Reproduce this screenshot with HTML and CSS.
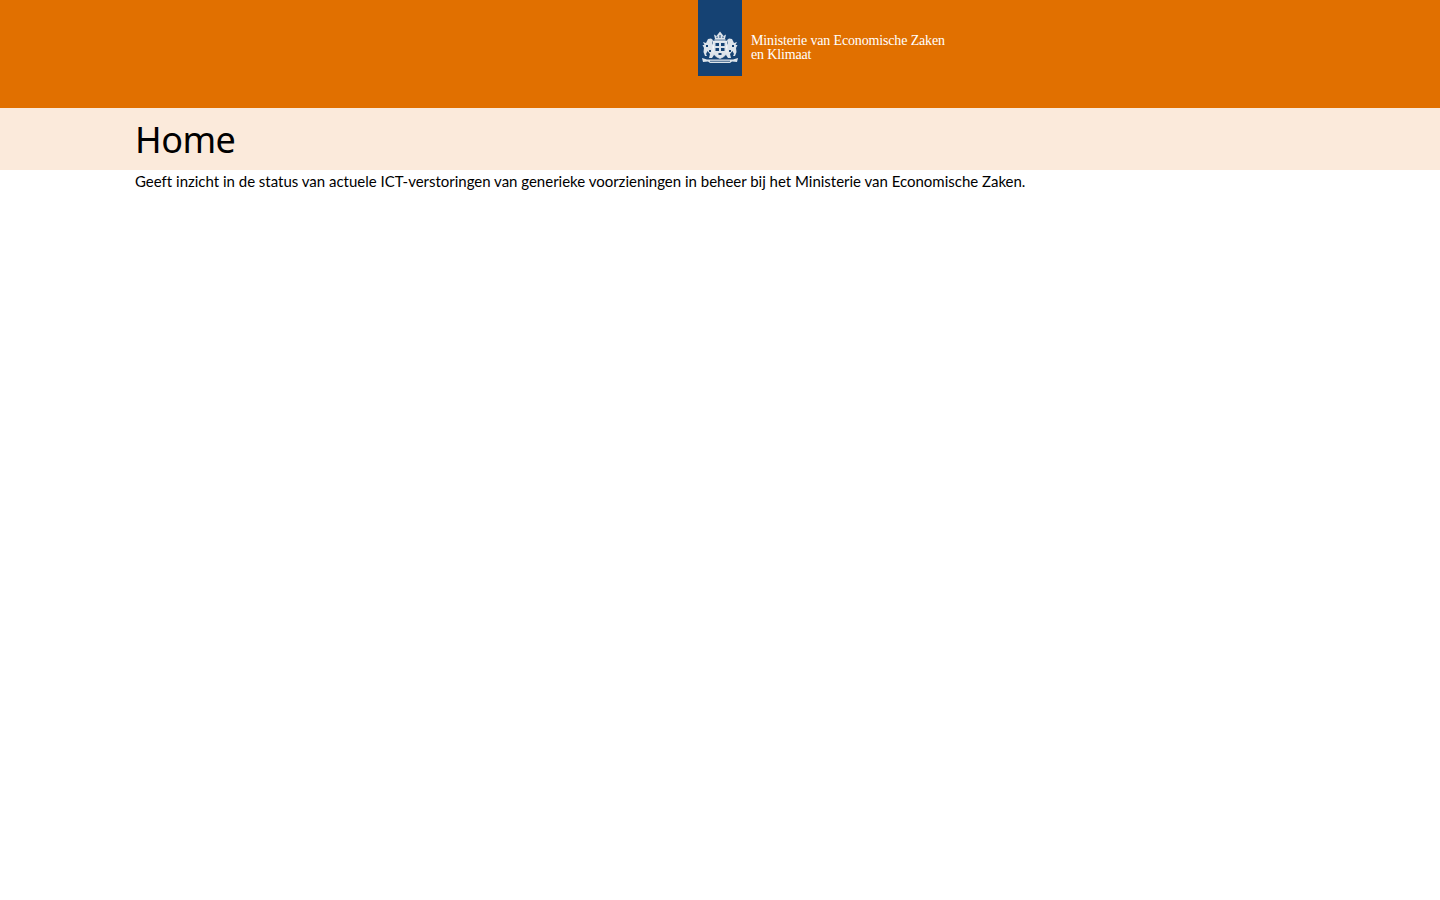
FILE: index.html
```html
<!DOCTYPE html>
<html lang="nl">
<head>
<meta charset="utf-8">
<title>Home</title>
<link rel="stylesheet" href="styles.css">
</head>
<body>
<header class="site-header">
  <a class="logo" href="#">
    <span class="logo-mark">
      <svg class="crest" viewBox="0 0 38 33" width="38" height="33" aria-hidden="true">
        <g fill="#fff" fill-opacity=".85">
          <path d="M14 8 L13 3.5 L15.5 5 L17 3 L19 .5 L21 3 L22.5 5 L25 3.5 L24 8 Z"/>
          <path d="M7 8 L10 7.5 L12 9 L11 12 L13 16 L12 19 L13 24 L11 27 L8 27 L9 23 L6.5 20 L5 23 L6 25 L4 25 L2.5 21 L3 17 L1.5 14 L3.5 14 L2 11 L5 12 Z"/>
          <path d="M31 8 L28 7.5 L26 9 L27 12 L25 16 L26 19 L25 24 L27 27 L30 27 L29 23 L31.5 20 L33 23 L32 25 L34 25 L35.5 21 L35 17 L36.5 14 L34.5 14 L36 11 L33 12 Z"/>
          <path d="M1 27 L6 28.5 L32 28.5 L37 27 L36 31 L31 30.5 L29 32 L9 32 L7 30.5 L2 31 Z"/>
          <path d="M12 10 H26 V20 Q26 25 19 27.5 Q12 25 12 20 Z" stroke="#fff" stroke-width=".6"/>
        </g>
        <g fill="#154273">
          <rect x="13.5" y="8.4" width="11" height="1" fill="#fff"/>
          <path d="M14.5 12 h3.5 v3 h-3.5z M20 12 h3.5 v3 h-3.5z M14.5 17 h3.5 v3 h-3.5z M20 17 h3.5 v3 h-3.5z M17.5 22 h3 v2 h-3z"/>
          <path d="M5 14 h2 v2 h-2z M8 19 h2 v2 h-2z M31 14 h2 v2 h-2z M28 19 h2 v2 h-2z"/>
          <rect x="9" y="29.8" width="20" height=".8"/>
          <path d="M15.5 5.5 h1 v1.5 h-1z M18.5 4 h1 v3 h-1z M21.5 5.5 h1 v1.5 h-1z"/>
        </g>
      </svg>
    </span>
    <span class="logo-text">Ministerie van Economische Zaken<br>en Klimaat</span>
  </a>
</header>
<div class="title-band">
  <h1 class="page-title">Home</h1>
</div>
<main class="content">
  <p class="intro">Geeft inzicht in de status van actuele ICT-verstoringen van generieke voorzieningen in beheer bij het Ministerie van Economische Zaken.</p>
</main>
</body>
</html>
```

FILE: styles.css
```css
html, body {
  margin: 0;
  padding: 0;
  background: #fff;
  color: #000;
  font-family: "Lato", "Noto Sans", sans-serif;
}
.site-header {
  height: 108px;
  background: #e17000;
  padding-left: calc(50% - 22px);
  box-sizing: border-box;
}
.logo {
  display: flex;
  align-items: flex-start;
  color: #fff;
  text-decoration: none;
}
.logo-mark {
  display: flex;
  justify-content: center;
  width: 44px;
  height: 76px;
  padding-top: 31px;
  box-sizing: border-box;
  background: #154273;
}
.logo-text {
  margin: 34px 0 0 9px;
  font-family: "Liberation Serif", serif;
  font-size: 14px;
  letter-spacing: -0.15px;
  line-height: 14px;
  white-space: nowrap;
}
.title-band {
  height: 62px;
  background: #fbeadb;
  padding-left: 135px;
}
.page-title {
  margin: 0;
  font-family: "Noto Sans", sans-serif;
  font-size: 36px;
  font-weight: 400;
  letter-spacing: -0.5px;
  line-height: 64px;
}
.content {
  padding-left: 135px;
}
.intro {
  margin: 3px 0 0;
  font-size: 15px;
  letter-spacing: -0.01px;
  line-height: 17px;
}
```
